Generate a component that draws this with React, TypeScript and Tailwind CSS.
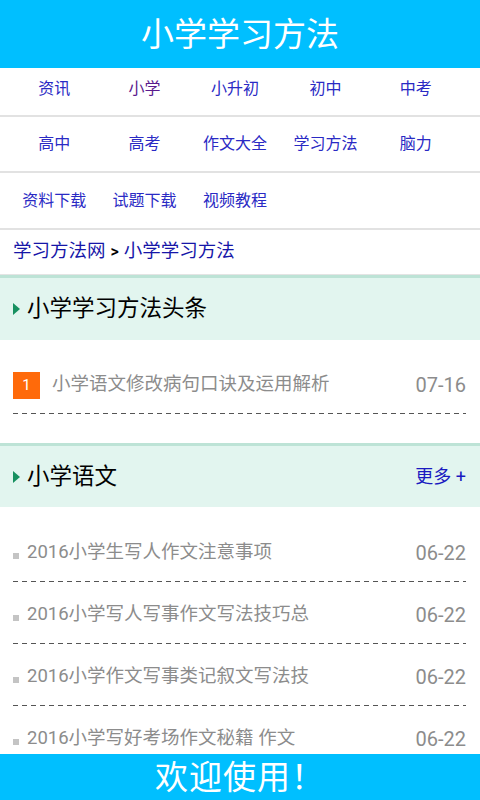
import React from 'react';

const navRows: { label: string; visited?: boolean }[][] = [
  [{ label: '资讯' }, { label: '小学', visited: true }, { label: '小升初' }, { label: '初中' }, { label: '中考' }],
  [{ label: '高中' }, { label: '高考' }, { label: '作文大全' }, { label: '学习方法' }, { label: '脑力' }],
  [{ label: '资料下载' }, { label: '试题下载' }, { label: '视频教程' }],
];

// heights include the 2px bottom border (border-box)
const rowStyles = ['h-[49px] pb-[6px]', 'h-[56px]', 'h-[57px]'];

const articles = [
  { title: '2016小学生写人作文注意事项', date: '06-22' },
  { title: '2016小学写人写事作文写法技巧总', date: '06-22' },
  { title: '2016小学作文写事类记叙文写法技', date: '06-22' },
  { title: '2016小学写好考场作文秘籍 作文', date: '06-22' },
];

const font = { fontFamily: "Roboto, 'Noto Sans CJK SC', sans-serif" };

const Dashed = () => (
  <div className="h-px bg-[linear-gradient(to_right,#555_5px,transparent_5px)] bg-[length:9px_1px]" />
);

const SectionHeader: React.FC<{ title: string; more?: boolean; height: string }> = ({ title, more, height }) => (
  <div className={`${height} w-full border-t-[3px] border-[#bde3d6] bg-[#e2f5ef] flex items-center justify-between pl-[13px] pr-[14px]`}>
    <div className="flex items-center gap-[7px]">
      <span className="w-0 h-0 border-y-[6px] border-y-transparent border-l-[7px] border-l-[#179060]" />
      <span className="text-[22.5px] text-black">{title}</span>
    </div>
    {more && <span className="text-[18px] text-[#1a1ac0]">更多 +</span>}
  </div>
);

const App: React.FC = () => {
  return (
    <div className="w-[480px] min-h-screen bg-white pb-[46px]" style={font}>
      {/* Header */}
      <div className="h-[68px] bg-[#00bfff] flex items-center justify-center">
        <h1 className="text-[33px] text-white leading-none">小学学习方法</h1>
      </div>

      {/* Nav grid */}
      {navRows.map((row, i) => (
        <div key={i} className={`${rowStyles[i]} border-b-2 border-[#e2e2e2] flex items-center`}>
          <div className="ml-[9px] w-[452px] grid grid-cols-5">
            {row.map((item) => (
              <span
                key={item.label}
                className={`text-center text-[16px] ${item.visited ? 'text-[#5a1a8e]' : 'text-[#2a2ac4]'}`}
              >
                {item.label}
              </span>
            ))}
          </div>
        </div>
      ))}

      {/* Breadcrumb */}
      <div className="h-[45px] border-b border-[#e4e4e4] flex items-center pl-[13px] text-[18.5px]">
        <span className="text-[#1616a8]">学习方法网</span>
        <span className="text-black mx-[5px] text-[16px] font-semibold">&gt;</span>
        <span className="text-[#1616a8]">小学学习方法</span>
      </div>

      {/* Headlines */}
      <SectionHeader title="小学学习方法头条" height="h-[65px]" />
      <div className="pt-[13px] pb-[28px] pl-[13px] pr-[14px]">
        <div className="h-[62px] flex flex-col">
          <div className="flex-1 pt-[4px] flex items-center justify-between">
            <div className="flex items-center gap-[12px]">
              <span className="w-[27px] h-[27px] bg-[#ff6a0a] text-white text-[15px] flex items-center justify-center">1</span>
              <span className="text-[18.5px] text-[#8c8c8c]">小学语文修改病句口诀及运用解析</span>
            </div>
            <span className="text-[20px] text-[#8c8c8c]">07-16</span>
          </div>
          <Dashed />
          <div className="h-px" />
        </div>
      </div>

      {/* Chinese section */}
      <SectionHeader title="小学语文" more height="h-[64px]" />
      <div className="pt-[13px] pl-[13px] pr-[14px]">
        {articles.map((a) => (
          <div key={a.title} className="h-[62px] flex flex-col">
            <div className="flex-1 pt-[4px] flex items-center justify-between">
              <div className="flex items-center">
                <span className="w-[6px] h-[6px] bg-[#c4c4c4] mt-[6px] mr-[8px]" />
                <span className="text-[18.5px] text-[#8c8c8c]">{a.title}</span>
              </div>
              <span className="text-[20px] text-[#8c8c8c]">{a.date}</span>
            </div>
            <Dashed />
          </div>
        ))}
      </div>

      {/* Footer */}
      <div className="fixed bottom-0 left-0 w-[480px] h-[46px] bg-[#00bfff] flex items-center justify-center">
        <span className="text-[33px] text-white leading-none tracking-[1px]">欢迎使用！</span>
      </div>
    </div>
  );
};

export default App;
